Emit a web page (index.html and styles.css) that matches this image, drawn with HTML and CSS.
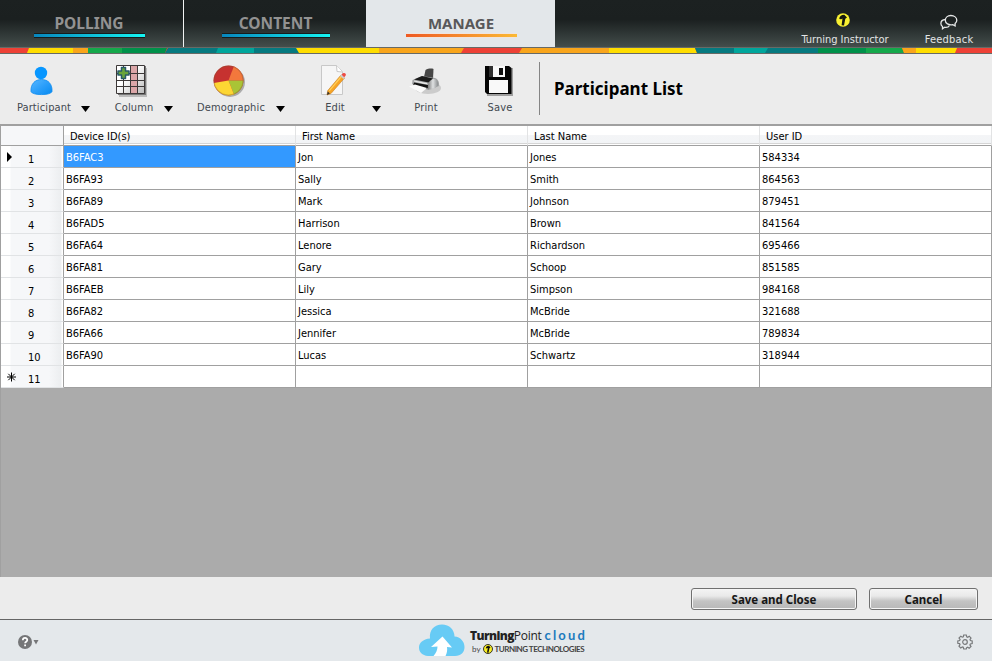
FILE: index.html
```html
<!DOCTYPE html>
<html lang="en">
<head>
<meta charset="utf-8">
<title>Participant List</title>
<link rel="stylesheet" href="styles.css">
</head>
<body>
<div class="app">
  <header class="topbar">
    <nav class="tabs">
      <div class="tab tab-polling"><span class="tab-label">POLLING</span><i class="underline"></i></div>
      <div class="tab tab-content"><span class="tab-label">CONTENT</span><i class="underline"></i></div>
      <div class="tab tab-manage"><span class="tab-label">MANAGE</span><i class="underline"></i></div>
    </nav>
    <div class="account">
      <div class="account-item instructor">
        <svg width="16" height="16" viewBox="0 0 16 16"><circle cx="8" cy="8" r="6.800" fill="#f8f032"/><path d="M4.300 7C4.300 4.300 6 2.800 9.300 2.700L12 5.600 10.300 6.800 9 13.600 6.600 13.300 7.500 6.500 6.200 7.200Z" fill="#16190f"/></svg>
        <span>Turning Instructor</span>
      </div>
      <div class="account-item feedback">
        <svg width="18" height="16" viewBox="0 0 18 16" fill="none" stroke="#e4e6e6" stroke-width="1.300"><path d="M5.400 5.500C2.500 5.700.9 7.500.9 9.500c0 1.300.6 2.300 1.600 3v2.300l2.200-1.500c2 .3 4-.3 4.800-1.800"/><path d="M10.800 1.500c3.500 0 6 2.100 6 4.800 0 1.400-.7 2.500-1.700 3.300v2.300l-2.300-1.300c-4.300.9-7.500-1.300-7.500-4.300 0-2.700 2.300-4.800 5.500-4.800Z"/></svg>
        <span>Feedback</span>
      </div>
    </div>
  </header>
  <svg class="stripe" width="992" height="7" viewBox="0 0 992 7">
    <path fill="#676a66" d="M0 0h992v7H0z"/>
    <path fill="#ee4136" d="M0 1h992v5H0z"/>
    <path fill="#ffdd00" d="M29 1H73V6H27z"/>
    <path fill="#f9a51b" d="M73 1h15v5H73z"/>
    <path fill="#14a84b" d="M88 1h34v5H88z"/>
    <path fill="#00914a" d="M122 1h45l-2 5h-43z"/>
    <path fill="#067a80" d="M168 1H299V6H165z"/>
    <path fill="#00a69c" d="M218 1h36v5h-38z"/>
    <path fill="#ffdd00" d="M296 1h83v5h-80z"/>
    <path fill="#f9a51b" d="M379 1h85l-3 5h-82z"/>
    <path fill="#f9a51b" d="M522 1h87v5h-90z"/>
    <path fill="#ffdd00" d="M609 1h86l2 5h-88z"/>
    <path fill="#067a80" d="M695 1h123v5H697z"/>
    <path fill="#00a69c" d="M734 1h34l-3 5h-31z"/>
    <path fill="#00914a" d="M818 1h48v5h-48z"/>
    <path fill="#14a84b" d="M866 1h36l2 5h-38z"/>
    <path fill="#f9a51b" d="M902 1h14v5h-12z"/>
    <path fill="#ffdd00" d="M916 1h41l-2 5h-39z"/>
  </svg>

  <div class="toolbar">
    <div class="tool participant">
      <svg width="40" height="36" viewBox="0 0 40 36">
        <defs><linearGradient id="person" x1="0" y1="0" x2="1" y2="1"><stop offset="0" stop-color="#58b7ff"/><stop offset=".5" stop-color="#2c9ffa"/><stop offset="1" stop-color="#078af0"/></linearGradient></defs>
        <circle cx="17" cy="10" r="6.200" fill="#0796ff"/><path d="M7 28.500C6.500 21 11 16.500 17.500 16.500S28.500 21 28 28.500C27 32.600 8 32.600 7 28.500Z" fill="url(#person)" stroke="#0c8cf0" stroke-width=".8"/>
      </svg>
      <span>Participant</span>
    </div>
    <i class="arrow"></i>
    <div class="tool column">
      <svg width="40" height="36" viewBox="0 0 40 36">
        <path d="M5 5h28v29H5z" fill="#999" opacity=".6"/><path d="M4 3h28v29H4z" fill="#777"/>
        <defs><linearGradient id="sheet" x1="0" y1="0" x2="1" y2="1"><stop offset=".4" stop-color="#fff"/><stop offset="1" stop-color="#bbb"/></linearGradient></defs>
        <path d="M3 3h27v27H3z" fill="url(#sheet)"/><path d="M17 3h7v27h-7z" fill="#dba6a8"/>
        <path d="M2.500 2.500h28v28h-28zM9.500 2v28M16.500 2v28M23.500 2v28M2 10.500h28M2 17.500h28M2 23.500h28" fill="none" stroke="#3c3838"/>
        <path d="M7.500 4.500h4v3.500h3.500v4h-3.500v3.500h-4v-3.500H4v-4h3.500z" fill="#68a43a" stroke="#285a68" stroke-width="1.500" stroke-linejoin="round"/>
      </svg>
      <span>Column</span>
    </div>
    <i class="arrow"></i>
    <div class="tool demographic">
      <svg width="40" height="36" viewBox="0 0 40 36">
        <circle cx="19" cy="19" r="15" fill="#888" opacity=".65"/>
        <circle cx="17.500" cy="17.500" r="15" fill="#c63230"/>
        <path d="M17.500 17.500 22.800 3.500A15 15 0 0 1 32.500 17.500Z" fill="#f3783c"/>
        <path d="M17.500 17.500H32.500A15 15 0 0 1 23 31.500Z" fill="#a9c436"/>
        <path d="M17.500 17.500 23 31.500A15 15 0 0 1 2.800 20Z" fill="#fdd633"/>
        <circle cx="17.500" cy="17.500" r="14.600" fill="none" stroke="#7b5930" stroke-opacity=".45" stroke-width=".8"/>
      </svg>
      <span>Demographic</span>
    </div>
    <i class="arrow"></i>
    <div class="tool edit">
      <svg width="40" height="36" viewBox="0 0 40 36">
        <path d="M6.500 2.500h15l6 6v23h-21z" fill="#f6f6f6" stroke="#c8c8c8"/><path d="m21.500 2.500.5 6 5.500.5" fill="#fff" stroke="#c8c8c8"/>
        <path d="m12 32 .8-4.500L26 12l3.500 3-13.500 15.500z" fill="#f7a425" stroke="#c67e20" stroke-width=".6"/>
        <path d="m14.200 27.800 13-15.300" stroke="#ffd05a" stroke-width="1.200"/><path d="m12 32 .7-3.500 2.200 2z" fill="#333"/><path d="m25 13 1.500-1.800 3.500 3-1.500 1.800z" fill="#ccc"/><path d="m26.500 11.500 1.500-1.300c2-1 3.700 1 2.500 2.500l-1.300 1.500z" fill="#ee4b43"/>
      </svg>
      <span>Edit</span>
    </div>
    <i class="arrow"></i>
    <div class="tool print">
      <svg width="40" height="36" viewBox="0 0 40 36">
        <defs><linearGradient id="roller"><stop offset="0" stop-color="#777"/><stop offset=".5" stop-color="#dfe1e2"/><stop offset="1" stop-color="#8a8d8f"/></linearGradient></defs>
        <ellipse cx="22" cy="25" rx="13" ry="6" fill="#aaa" opacity=".5"/>
        <path d="m18 14 1.500-7c2.500-1.500 6-1.800 8-1l-.5 10z" fill="#474747"/>
        <path d="M6.500 17 16 13l13 2c3 1 4.500 4 4 8l-7 3-4 1-16-6z" fill="#a4a6a7"/>
        <path d="M8 16.500 16 13l11 2.500-4.500 4z" fill="#1b1b1b"/>
        <path d="m8 17.500 13 2.500 .500 1.800-13.500-3.300z" fill="#e8e8e8"/>
        <path d="m8 19.500 14 2.500v3l-3 1-12-3z" fill="#111"/>
        <path d="M22 26.500c-1-4 1-9 5-10.500 4-.5 5.500 3 5 6.500l-4 3z" fill="url(#roller)"/>
        <path d="m3 23.500 6-2 12 3.500-6 5z" fill="#fafafa"/>
      </svg>
      <span>Print</span>
    </div>
    <div class="tool save">
      <svg width="40" height="36" viewBox="0 0 40 36">
        <path d="M7 5h26v28H7z" fill="#777" opacity=".65"/>
        <path d="M5 3h24l2.500 2v26H7l-2-2z" fill="#050505"/><path d="M9 3h4v11H9z" fill="#303030"/><path d="M13 3h12v11H13zM9 17h19v13H9z" fill="#f9f9f9"/><path d="M19 5h4v7h-4z" fill="#111"/>
      </svg>
      <span>Save</span>
    </div>
    <i class="divider"></i>
    <h1>Participant List</h1>
  </div>

  <main class="grid-area">
    <table>
      <colgroup><col class="c-row"><col class="c-data"><col class="c-data"><col class="c-data"><col class="c-data"></colgroup>
      <thead><tr><th></th><th>Device ID(s)</th><th>First Name</th><th>Last Name</th><th>User ID</th></tr></thead>
      <tbody>
        <tr><th><svg class="marker" width="12" height="12" viewBox="0 0 12 12"><path d="M4 1v10l5-5z"/></svg>1</th><td class="selected">B6FAC3</td><td>Jon</td><td>Jones</td><td>584334</td></tr>
        <tr><th>2</th><td>B6FA93</td><td>Sally</td><td>Smith</td><td>864563</td></tr>
        <tr><th>3</th><td>B6FA89</td><td>Mark</td><td>Johnson</td><td>879451</td></tr>
        <tr><th>4</th><td>B6FAD5</td><td>Harrison</td><td>Brown</td><td>841564</td></tr>
        <tr><th>5</th><td>B6FA64</td><td>Lenore</td><td>Richardson</td><td>695466</td></tr>
        <tr><th>6</th><td>B6FA81</td><td>Gary</td><td>Schoop</td><td>851585</td></tr>
        <tr><th>7</th><td>B6FAEB</td><td>Lily</td><td>Simpson</td><td>984168</td></tr>
        <tr><th>8</th><td>B6FA82</td><td>Jessica</td><td>McBride</td><td>321688</td></tr>
        <tr><th>9</th><td>B6FA66</td><td>Jennifer</td><td>McBride</td><td>789834</td></tr>
        <tr><th>10</th><td>B6FA90</td><td>Lucas</td><td>Schwartz</td><td>318944</td></tr>
        <tr><th><svg class="marker" width="14" height="12" viewBox="0 0 14 12"><path d="M8.500 1.500v9M4 6h9M5.300 2.800l6.400 6.400M11.700 2.800 5.300 9.200" stroke="#000"/></svg>11</th><td></td><td></td><td></td><td></td></tr>
      </tbody>
    </table>
  </main>

  <div class="actions">
    <button class="btn btn-save">Save and Close</button>
    <button class="btn btn-cancel">Cancel</button>
  </div>

  <footer class="footer">
    <div class="help">
      <svg width="22" height="16" viewBox="0 0 22 16"><circle cx="7" cy="8" r="7" fill="#757678"/><path d="M4.800 6.200C4.900 3.200 9.300 3.300 9.300 6c0 1.700-2.200 1.700-2.200 3.200" fill="none" stroke="#fff" stroke-width="1.700"/><path d="M6.200 10.500H8v1.700H6.200z" fill="#fff"/><path d="M15.500 6h5L18 10.500z" fill="#757678"/></svg>
    </div>
    <div class="brand">
      <svg width="46" height="33" viewBox="0 0 46 33"><path d="M9 32C3 31.500 0 28 0 23.500S4 15 11 14.500C10 6 15.500.5 23 .5S35.500 6 35.500 12.500C41.500 13 45.500 17.500 45.500 23S42 32 36 32Z" fill="#67cbf5"/><path d="M14.500 32C17 29 18.500 26 18.500 22.500L12 23 23.500 12.500 33 23.500 28 23C28.500 26 28 29 26.500 32Z" fill="#fff"/></svg>
      <div class="brand-text">
        <div class="brand-name"><b>Turning</b><span class="point">Point</span><span class="cloud">cloud</span></div>
        <div class="brand-by"><span class="by">by</span><svg width="10" height="10" viewBox="0 0 10 10"><circle cx="5" cy="5" r="4.500" fill="#f7ed24" stroke="#222" stroke-width=".9"/><path d="M2.800 4.500C3 2.500 4.200 1.800 6 1.800L7.500 3.500 6.400 4.200 5.500 8.800 4 8.500 4.800 4z" fill="#111"/></svg><span class="tech">TURNING TECHNOLOGIES</span></div>
      </div>
    </div>
    <div class="settings">
      <svg width="16" height="16" viewBox="0 0 16 16" fill="none" stroke="#77797b" stroke-width="1.200"><path d="M6.700 1h2.600l.4 1.900 1 .4 1.600-1.100 1.700 1.800-1 1.600.4 1 1.800.4v2.500l-1.800.4-.5 1 1.100 1.600-1.800 1.700-1.500-1-1 .4L9.300 15H6.700l-.4-1.700-1-.4-1.600 1-1.700-1.700 1-1.600-.4-1L.8 9.300V6.900l1.800-.4.5-1L2 4l1.800-1.800 1.500 1 1-.4z"/><circle cx="8" cy="8" r="2.300"/></svg>
    </div>
  </footer>
</div>
</body>
</html>
```
FILE: styles.css
```css
* { box-sizing: border-box; }
body { margin: 0; font-family: "DejaVu Sans Condensed", "DejaVu Sans", sans-serif; font-stretch: condensed; font-size: 11px; color: #000; }
svg { display: block; flex: none; }
.app { width: 992px; height: 661px; display: flex; flex-direction: column; background: #ececec; overflow: hidden; }

.topbar { height: 47px; flex: none; display: flex; justify-content: space-between; background: linear-gradient(#1c2121 0, #1b2020 42%, #434d4b 100%); }
.tabs { display: flex; }
.tab { height: 47px; padding-top: 14px; display: flex; flex-direction: column; align-items: center; color: #929292; }
.tab-label { height: 18px; line-height: 18px; font-family: "Noto Sans", sans-serif; font-stretch: normal; font-weight: 700; font-size: 15.5px; }
.underline { width: 111px; height: 5px; margin-top: 1px; border: 1px solid #151c1d; border-width: 1px 0; background: linear-gradient(90deg, #0786bd, #15f5f3); }
.tab-polling { width: 184px; border-right: 1px solid #f1f3f3; padding-right: 5px; }
.tab-content { width: 182px; padding-left: 1px; }
.tab-manage { width: 189px; padding-left: 1px; color: #58585a; background: #e3e7ea; }
.tab-manage .tab-label { font-size: 15px; }
.tab-manage .underline { border-color: #f0e4de; background: linear-gradient(90deg, #ee5a23, #fbb934); }
.tab-content .underline { width: 108px; }
.account { display: flex; color: #e3e5e5; }
.account-item { display: flex; flex-direction: column; align-items: center; white-space: nowrap; padding-top: 12px; line-height: 13px; }
.account-item span { margin-top: 5px; }
.instructor { width: 100px; margin-right: 29px; }
.instructor svg { margin-right: 4px; }
.feedback { width: 50px; margin-right: 18px; letter-spacing: .2px; }
.feedback svg { margin-top: 2px; }
.feedback span { margin-top: 3px; }
.stripe { height: 7px; }

.toolbar { height: 70px; flex: none; display: flex; padding: 9px 0 0 14px; color: #434950; }
.tool { width: 60px; display: flex; flex-direction: column; align-items: center; white-space: nowrap; }
.tool span { line-height: 14px; margin-top: 2px; letter-spacing: .12px; }
.arrow { width: 9px; height: 6px; margin: 43px 0 0 7px; background: #000; clip-path: polygon(0 0, 100% 0, 50% 100%); }
.column { margin-left: 14px; }
.column + .arrow { margin-left: 0; }
.demographic { width: 80px; margin-left: 18px; }
.demographic + .arrow { margin-left: 5px; }
.edit { margin-left: 20px; }
.print { margin-left: 15px; }
.save { margin-left: 14px; }
.divider { width: 1px; height: 53px; margin: -1px 0 0 9px; background: #858585; }
h1 { margin: 16px 0 0 14px; color: #000; font: 700 17px/20px "Noto Sans", sans-serif; white-space: nowrap; }

.grid-area { height: 453px; flex: none; background: #ababab; border-top: 2px solid #a0a0a0; border-left: 1px solid #a0a0a0; }
table { width: 991px; table-layout: fixed; border-collapse: separate; border-spacing: 0; background: #fff; }
.c-row { width: 63px; }
.c-data { width: 232px; }
th { font-weight: 400; text-align: left; }
thead th { height: 20px; padding: 2px 0 0 6px; border-bottom: 1px solid #a0a0a0; border-right: 1px solid #e2e3e4; background: linear-gradient(#fff 45%, #f4f5f7 46%, #f2f4f6 90%, #d5d5d5 91%, #d5d5d5 96%, #fff 97%); }
thead th:first-child { border-right-color: #a0a0a0; background: #f6f7f9; }
tbody td { height: 22px; padding: 2px 0 0 2px; border-right: 1px solid #a0a0a0; border-bottom: 1px solid #a0a0a0; }
td.selected { color: #fff; background: #3399ff; }
tbody th { position: relative; height: 22px; padding: 6px 0 0 27px; border-right: 1px solid #a0a0a0; border-bottom: 1px solid #e1e3e5; background: linear-gradient(90deg, #fff 9px, #f6f7f9 10px, #f6f7f9 48px, #eceef0 60px, #fff 61px); }
.marker { position: absolute; left: 2px; top: 5px; }

.actions { height: 43px; flex: none; display: flex; justify-content: flex-end; gap: 12px; padding: 11px 14px 0 0; border-bottom: 1px solid #656565; }
.btn { height: 22px; padding: 2px 0 0; border: 1px solid #707070; border-radius: 3px; background: linear-gradient(#f4f4f4 0, #e9e9e9 35%, #c4c4c4 60%, #b8b8b8 100%); box-shadow: inset 0 0 0 1px #f5f5f5; font: 700 11.5px/18px "Noto Sans", sans-serif; color: #161616; }
.btn-save { width: 166px; }
.btn-cancel { width: 109px; }

.footer { height: 41px; flex: none; display: flex; justify-content: space-between; background: #e4e8eb; }
.help { width: 419px; padding: 14px 0 0 18px; }
.brand { display: flex; padding-top: 4px; }
.brand-text { padding: 4px 0 0 5px; white-space: nowrap; }
.brand-name { height: 15px; display: flex; font: 12px/15px "Open Sans", sans-serif; color: #222; }
.brand-name b { font-weight: 800; letter-spacing: -.6px; }
.point { letter-spacing: -.3px; }
.cloud { margin-left: 3px; font-family: Lato, sans-serif; font-size: 13px; font-weight: 700; letter-spacing: 2.200px; color: #1c7bbd; }
.brand-by { display: flex; align-items: center; gap: 2px; height: 10px; margin-top: 1px; font: 8px/10px Lato, sans-serif; color: #444; padding-left: 2px; }
.tech { font-weight: 700; font-size: 8px; letter-spacing: -.47px; }
.settings { flex: 1; display: flex; justify-content: flex-end; padding: 14px 19px 0 0; }
```
